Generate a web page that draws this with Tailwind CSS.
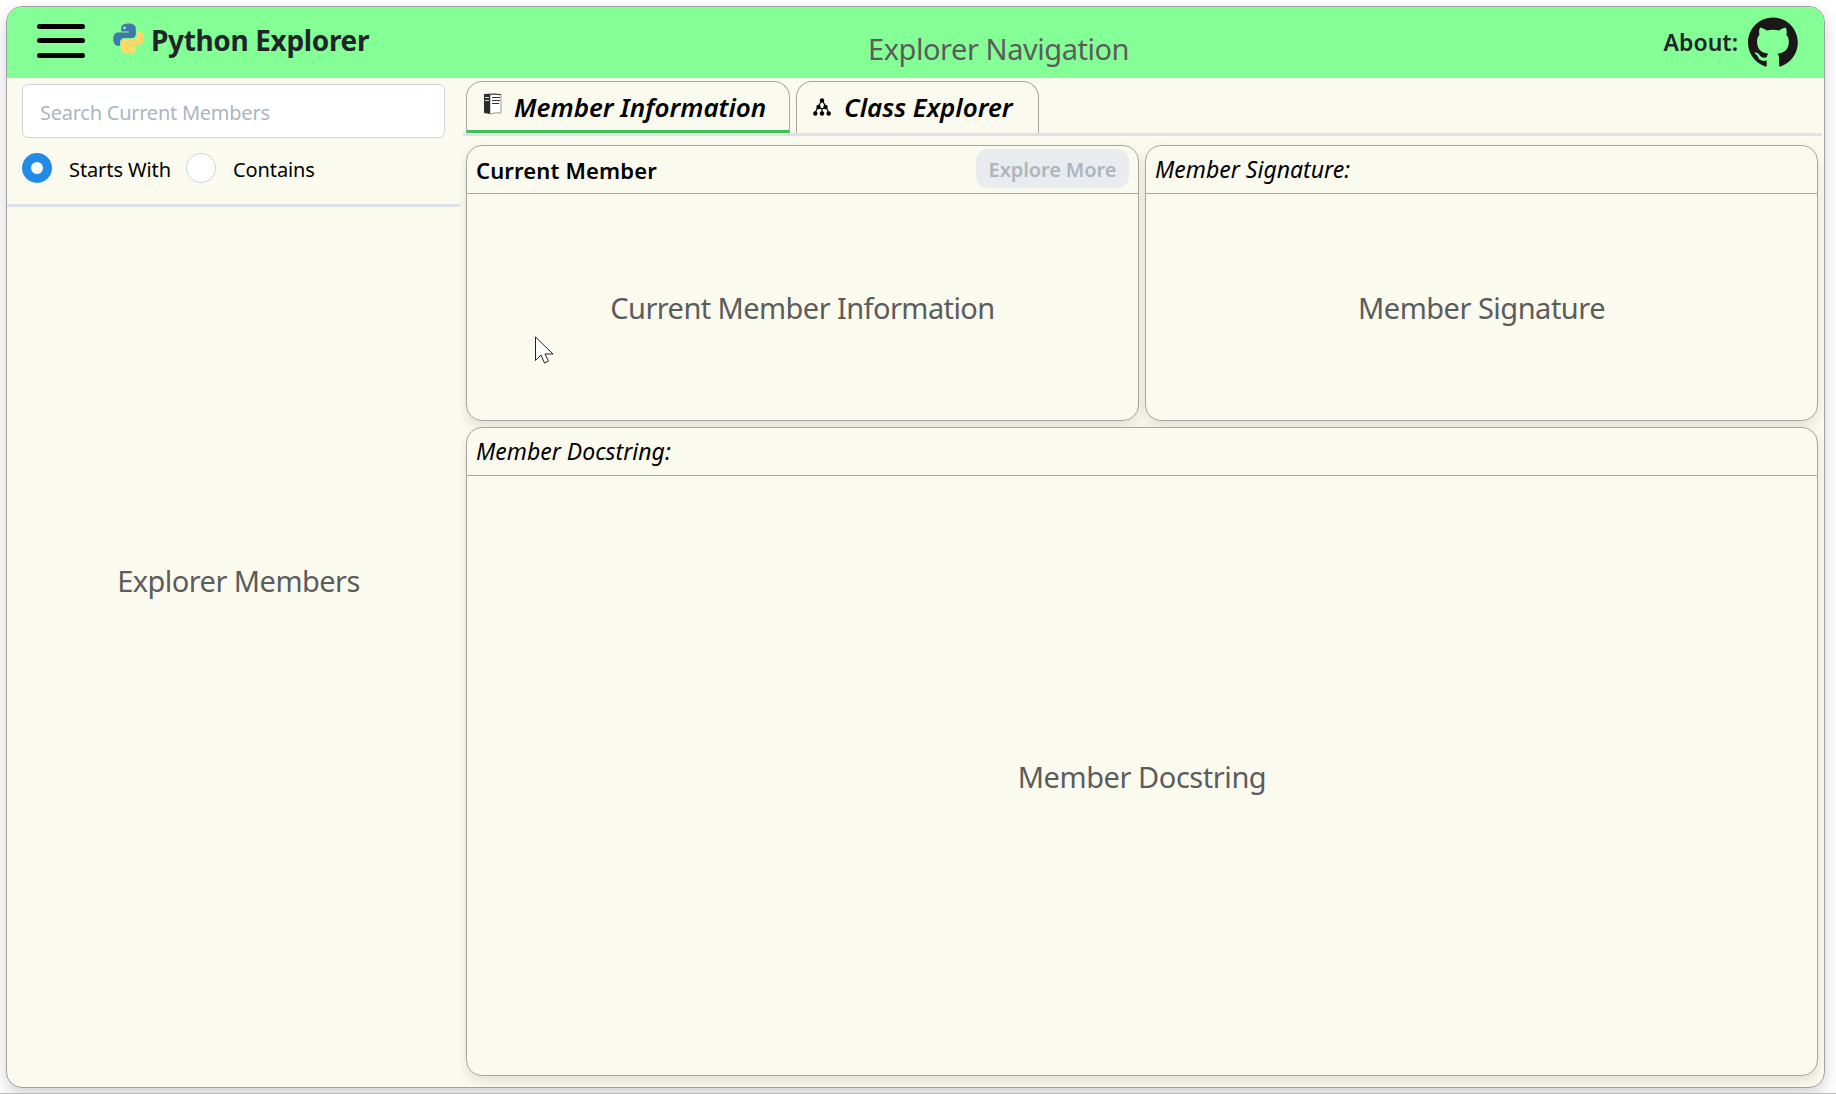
<!DOCTYPE html>
<html lang="en">
<head>
<meta charset="utf-8">
<title>Python Explorer</title>
<script src="https://cdn.jsdelivr.net/npm/@tailwindcss/browser@4"></script>
</head>
<body class="h-[1094px] overflow-hidden bg-white font-['Noto_Sans','Open_Sans',sans-serif] text-black border-b border-[#b9b9b9] p-1.5 pr-[11px]">
<div class="flex h-[1082px] flex-col overflow-hidden rounded-[16px] border border-[#a0a0a0] bg-[#fafbee] shadow-[0_6px_16px_rgba(0,0,0,0.18)]">
  <header class="flex h-[71px] shrink-0 items-center bg-[#84ff96] text-[#212529]">
    <div class="flex w-[861px] items-center pl-[30px]">
      <div class="-mt-1 flex h-[34px] w-12 flex-col justify-between">
        <span class="h-[5px] rounded-full bg-black"></span><span class="h-[5px] rounded-full bg-black"></span><span class="h-[5px] rounded-full bg-black"></span>
      </div>
      <svg class="ml-7 -mt-2 size-[31px]" viewBox="0 0 110 110"><path fill="#4178aa" d="M54 2C32 2 29 12 29 20v10h27v4H19C7 34 1 43 1 56s6 25 16 25h8V68c0-9 7-15 15-15h28c8 0 13-6 13-14V20C81 8 70 2 54 2Z"/><path fill="#ffd766" d="M56 109c22 0 25-10 25-18V81H54v-4h37c12 0 18-9 18-22s-6-25-16-25h-8v13c0 9-7 15-15 15H42c-8 0-13 6-13 14v19c0 12 11 18 27 18Z"/><circle cx="41" cy="17" r="5" fill="#b8dccd"/><circle cx="68" cy="95" r="5" fill="#c3f58c"/></svg>
      <h1 class="ml-[7px] -mt-[5px] text-[28px] font-bold leading-none tracking-[-0.35px] whitespace-nowrap">Python Explorer</h1>
    </div>
    <div class="pt-3 text-[29px] leading-none tracking-[-0.45px] text-[#5c5c5c] whitespace-nowrap">Explorer Navigation</div>
    <div class="-mt-px flex flex-1 items-center justify-end pr-[26px]">
      <span class="text-[23px] font-semibold leading-none">About:</span>
      <svg class="ml-2.5 size-[50px]" viewBox="0 0 98 96" fill="#191717"><path fill-rule="evenodd" d="M48.854 0C21.839 0 0 22 0 49.217c0 21.756 13.993 40.172 33.405 46.69 2.427.49 3.316-1.059 3.316-2.362 0-1.141-.08-5.052-.08-9.127-13.59 2.934-16.42-5.867-16.42-5.867-2.184-5.704-5.42-7.17-5.42-7.17-4.448-3.015.324-3.015.324-3.015 4.934.326 7.523 5.052 7.523 5.052 4.367 7.496 11.404 5.378 14.235 4.074.404-3.178 1.699-5.378 3.074-6.6-10.839-1.141-22.243-5.378-22.243-24.283 0-5.378 1.94-9.778 5.014-13.2-.485-1.222-2.184-6.275.486-13.038 0 0 4.125-1.304 13.426 5.052a46.97 46.97 0 0 1 12.214-1.63c4.125 0 8.33.571 12.213 1.63 9.302-6.356 13.427-5.052 13.427-5.052 2.67 6.763.97 11.816.485 13.038 3.155 3.422 5.015 7.822 5.015 13.2 0 18.905-11.404 23.06-22.324 24.283 1.78 1.548 3.316 4.481 3.316 9.126 0 6.6-.08 11.897-.08 13.526 0 1.304.89 2.853 3.316 2.364 19.412-6.52 33.405-24.935 33.405-46.691C97.707 22 75.788 0 48.854 0z"/></svg>
    </div>
  </header>
  <div class="flex min-h-0 flex-1">
    <aside class="flex w-[453px] shrink-0 flex-col">
      <div class="h-[129px] shrink-0 border-b-3 border-[#dee2e6] px-[15px] pt-1.5">
        <div class="flex h-[54px] items-center rounded-md border border-[#ced4da] bg-white pl-[17px] pt-[3px] text-[20px] tracking-[-0.25px] text-[#adb5bd]">Search Current Members</div>
        <div class="mt-[15px] flex h-[30px] items-center text-[20px] tracking-[-0.1px]">
          <span class="flex size-[30px] items-center justify-center rounded-full bg-[#228be6]"><span class="size-3 rounded-full bg-white"></span></span>
          <span class="ml-[17px] w-[117px] pt-[3px] whitespace-nowrap">Starts With</span>
          <span class="size-[30px] rounded-full border border-[#ced4da] bg-white"></span>
          <span class="ml-[17px] pt-[3px]">Contains</span>
        </div>
      </div>
      <div class="flex flex-1 items-center justify-center pl-2.5 pb-[133px] text-[29px] tracking-[-0.55px] text-[#5c5c5c]">Explorer Members</div>
    </aside>
    <main class="flex min-w-0 flex-1 flex-col overflow-hidden pl-[3px] pr-[2px] pt-[3px]">
      <nav class="flex h-[55px] shrink-0 items-end gap-1.5 border-b-3 border-[#dee2e6] pl-[3px] text-[26px] font-semibold italic">
        <div class="flex h-[52px] w-[324px] items-center rounded-t-[16px] border border-b-3 border-[#a6a6a6] border-b-[#40c057] pl-4">
          <svg class="mb-1 h-[22px] w-[19px]" viewBox="0 0 19 22"><path fill="#fff" stroke="#999" d="M7 2q5-2 11 0v18q-5-1-11 1z"/><path fill="#2a2d28" d="M1 1h6v20l-6-1z"/><path stroke="#ddd" d="M2 4.500h4M2 7.500h4"/><path fill="none" stroke="#333" d="M1 1.500q8-1 17 0M9 4.500h8M9 7.500h8M9 10.500h7"/></svg>
          <span class="ml-3 pt-0.5 whitespace-nowrap">Member Information</span>
        </div>
        <div class="flex h-[52px] w-[243px] items-center rounded-t-[16px] border border-b-0 border-[#a6a6a6] pl-4">
          <svg class="mb-0.5 h-5 w-[18px]" viewBox="0 0 18 20"><path fill="none" stroke="#000" stroke-width="1.200" d="M9 3 5 10 2 16M9 3l4 7 3 6M5 10l1 0M9 16v-5M5 10l4 2 4-2"/><g><circle cx="9" cy="3.500" r="2.200"/><circle cx="5.500" cy="10" r="2.200"/><circle cx="12.500" cy="10" r="2.200"/><circle cx="2.300" cy="16.500" r="2.200"/><circle cx="9" cy="16.500" r="2.200"/><circle cx="15.700" cy="16.500" r="2.200"/></g></svg>
          <span class="ml-[13px] whitespace-nowrap">Class Explorer</span>
        </div>
      </nav>
      <div class="grid min-h-0 flex-1 grid-cols-2 grid-rows-[276px_649px] gap-1.5 pl-[3px] pr-1 pt-[9px]">
        <section class="flex flex-col rounded-[16px] border border-[#a6a6a6] bg-[#fafbee] shadow-[0_5px_12px_rgba(0,0,0,0.1)]">
          <div class="flex h-12 items-center justify-between border-b border-[#a6a6a6] pl-[9px] pr-[9px]">
            <span class="pt-px text-[22px] font-semibold tracking-[0.15px]">Current Member</span>
            <span class="mb-[2px] flex h-[39px] w-[153px] items-center justify-center rounded-[12px] bg-[#e9ecef] pt-[3px] text-[20px] font-semibold tracking-[-0.1px] text-[#adb5bd]">Explore More</span>
          </div>
          <div class="flex flex-1 items-center justify-center pt-0.5 text-[29px] tracking-[-0.58px] text-[#5c5c5c]">Current Member Information</div>
        </section>
        <section class="flex flex-col rounded-[16px] border border-[#a6a6a6] bg-[#fafbee] shadow-[0_5px_12px_rgba(0,0,0,0.1)]">
          <div class="flex h-12 items-center border-b border-[#a6a6a6] pl-[9px] text-[23px] italic">Member Signature:</div>
          <div class="flex flex-1 items-center justify-center pt-0.5 text-[29px] tracking-[-0.5px] text-[#5c5c5c]">Member Signature</div>
        </section>
        <section class="col-span-2 flex flex-col rounded-[16px] border border-[#a6a6a6] bg-[#fafbee] shadow-[0_5px_12px_rgba(0,0,0,0.1)]">
          <div class="flex h-12 shrink-0 items-center border-b border-[#a6a6a6] pl-[9px] text-[23px] italic">Member Docstring:</div>
          <div class="flex flex-1 items-center justify-center pt-[3px] text-[29px] tracking-[-0.45px] text-[#5c5c5c]">Member Docstring</div>
        </section>
      </div>
    </main>
  </div>
</div>
<svg class="absolute left-[535px] top-[336px] h-7 w-[19px]" viewBox="0 0 19 28"><path fill="#fff" stroke="#222" d="M.5 1v23.500L6 19l3.500 8 4-2-3.500-7H18z"/></svg>
</body>
</html>
